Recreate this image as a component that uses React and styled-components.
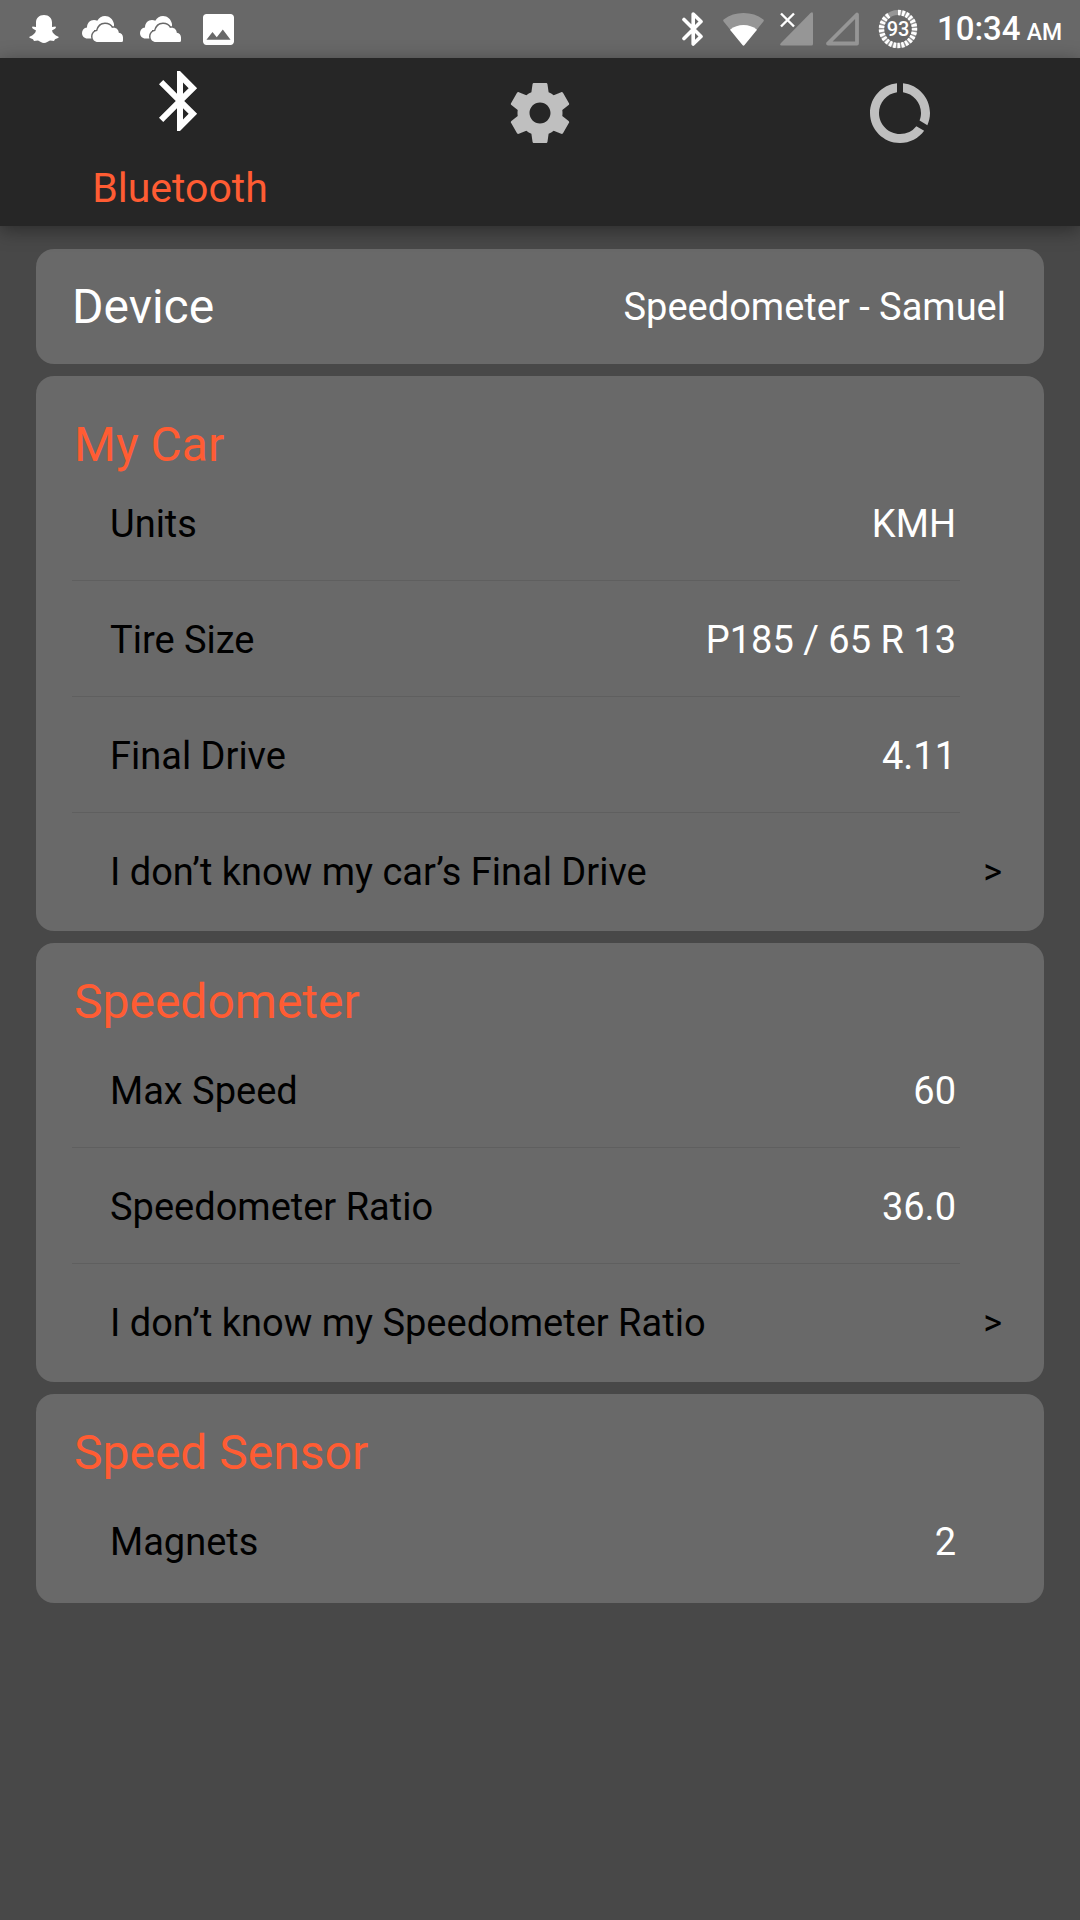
import React from "react";
import styled, { createGlobalStyle } from "styled-components";
import { MdBluetooth, MdDataUsage } from "react-icons/md";

const color = {
  page: "#484848",
  card: "#696969",
  status: "#686868",
  bar: "#262626",
  accent: "#ff5c33",
  muted: "#bfbfbf",
  faded: "#969696",
  line: "#5f5f5f",
};

const GlobalStyle = createGlobalStyle`
  * { box-sizing: border-box; }
  body {
    margin: 0;
    background: ${color.page};
    font-family: Roboto, "Liberation Sans", sans-serif;
    color: #fff;
  }
`;

const StatusBar = styled.header`
  display: flex;
  justify-content: space-between;
  align-items: center;
  height: 58px;
  padding: 0 18px 0 20px;
  background: ${color.status};
`;

const Notifications = styled.div`
  display: flex;
  align-items: center;
  gap: 10px;
`;

const NotificationSlot = styled.span`
  display: flex;
  justify-content: center;
  width: 48px;
`;

const Indicators = styled.div`
  display: flex;
  align-items: center;
  gap: 16px;
`;

const SignalPair = styled.span`
  display: flex;
  gap: 13px;
`;

const Clock = styled.time`
  padding-top: 4px;
  font-size: 33px;
  line-height: 40px;
  font-weight: 500;
  white-space: nowrap;
`;

const Meridiem = styled.small`
  margin-left: 6px;
  font-size: 23px;
`;

const TabBar = styled.nav`
  position: relative;
  display: grid;
  grid-template-columns: repeat(3, 1fr);
  height: 168px;
  background: ${color.bar};
  box-shadow: 0 4px 18px rgba(0, 0, 0, 0.4);
`;

const Tab = styled.button`
  display: flex;
  flex-direction: column;
  align-items: center;
  gap: 27px;
  padding: ${(p) => (p.$active ? "7px" : "19px")} 0 0;
  border: 0;
  background: none;
  color: ${(p) => (p.$active ? "#fff" : color.muted)};
  font: inherit;
  cursor: pointer;
`;

const TabLabel = styled.span`
  color: ${color.accent};
  font-size: 41px;
  line-height: 48px;
`;

const Settings = styled.main`
  display: flex;
  flex-direction: column;
  gap: 12px;
  padding: 23px 36px;
`;

const Card = styled.section`
  padding: 0 36px 4px;
  border-radius: 18px;
  background: ${color.card};
`;

const DeviceCard = styled(Card)`
  display: flex;
  align-items: center;
  justify-content: space-between;
  height: 115px;
  padding: 0 38px 0 36px;
`;

const DeviceLabel = styled.label`
  font-size: 48px;
  line-height: 56px;
`;

const CardTitle = styled.h2`
  height: 89px;
  margin: 0;
  padding: ${(p) => (p.$low ? "41px" : "31px")} 0 0 2px;
  color: ${color.accent};
  font-size: 48px;
  line-height: 56px;
  font-weight: 400;
`;

const Row = styled.div`
  display: flex;
  align-items: center;
  justify-content: space-between;
  height: 116px;
  margin-right: 48px;
  padding: 3px 4px 0 38px;
  border-bottom: 1px solid ${(p) => (p.$last ? "transparent" : color.line)};
`;

const RowLabel = styled.label`
  color: #000;
  font-size: 38px;
  line-height: 44px;
`;

const Field = styled.input`
  width: 360px;
  padding: 0;
  border: 0;
  outline: 0;
  background: none;
  color: #fff;
  font: inherit;
  font-size: 38px;
  line-height: 44px;
  text-align: right;
`;

const Picker = styled.select`
  appearance: none;
  padding: 0;
  border: 0;
  outline: 0;
  background: none;
  color: #fff;
  font: inherit;
  font-size: 38px;
  line-height: 44px;
  text-align-last: right;
`;

const HelpLink = styled.a`
  display: flex;
  align-items: center;
  justify-content: space-between;
  height: 114px;
  padding: 4px 6px 0 38px;
  color: #000;
  font-size: 38px;
  line-height: 44px;
  text-decoration: none;
`;

const Chevron = styled.span`
  font-size: 36px;
`;

const SnapchatIcon = () => (
  <svg width="30" height="28" viewBox="0 0 30 28" fill="#fff" aria-hidden="true">
    <path d="M15 0C10 0 7 3.2 7 7.5V12L3.6 11.6Q2.4 12.8 4 13.8L7 15.4C6.5 18 4 20.4 1 21.5Q-.3 22.2 1 23L4 24.2L5 26L9 25.6C11 26.4 12.5 28 15 28S19 26.4 21 25.6L25 26L26 24.2L29 23Q30.3 22.2 29 21.5C26 20.4 23.5 18 23 15.4L26 13.8Q27.6 12.8 26.4 11.6L23 12V7.5C23 3.2 20 0 15 0Z" />
  </svg>
);

const frontCloud =
  "M16 26C12.500 26 10.500 23.600 10.500 20.500C10.500 17.500 12.600 15.300 15.300 15C16.300 10.800 19.200 8 23 8C26.300 8 28.800 9.600 30 12C33.800 11 36.600 13.400 36.800 16.800C39.400 17 41 19 41 21.500V24.500Q41 26 39.500 26Z";

const CloudIcon = () => (
  <svg width="41" height="26" viewBox="0 0 41 26" fill="#fff" aria-hidden="true">
    <path d="M5.500 22.500C2.200 22.500 0 20 0 17C0 14 2 11.800 5 11.500C5 7 8 4 12 4C13.200 4 14.400 4.300 15.300 4.800C17 1.800 19.700 0 23 0C27.500 0 31 3 32 8V14H12V22.500Z" />
    <path d={frontCloud} stroke={color.status} strokeWidth="3" />
    <path d={frontCloud} />
  </svg>
);

const PictureIcon = () => (
  <svg width="31" height="31" viewBox="3 3 18 18" fill="#fff" aria-hidden="true">
    <path d="M21 19V5c0-1.100-.9-2-2-2H5c-1.100 0-2 .9-2 2v14c0 1.100.9 2 2 2h14c1.100 0 2-.9 2-2zM8.500 13.500l2.500 3.010L14.500 12l4.500 6H5l3.500-4.500z" />
  </svg>
);

const BluetoothStatusIcon = () => (
  <svg width="29" height="34" viewBox="0 0 29 34" fill="none" stroke="#fff" strokeWidth="3.600" strokeLinejoin="round" strokeLinecap="round" aria-hidden="true">
    <path d="M6 7.500L23 24.500L15.200 32V2L23 9.500L6 26.500" />
  </svg>
);

const WifiIcon = () => (
  <svg width="41" height="33" viewBox="0 0 41 33" aria-hidden="true">
    <path fill={color.faded} d="M.6 8.600Q-.4 7.300 1 6.300C6.500 2 13 0 20.500 0S34.500 2 40 6.300Q41.400 7.300 40.400 8.600L20.500 33Z" />
    <path fill="#fff" d="M7 16.700C11 13.500 15.500 12 20.500 12S30 13.500 34 16.700L21.500 32Q20.500 33 19.500 32Z" />
  </svg>
);

const NoSignalIcon = () => (
  <svg width="33" height="34" viewBox="0 0 33 34" aria-hidden="true">
    <path fill={color.faded} d="M30.500 1Q33 -1 33 2V32Q33 33.500 31.500 33.500H1.500Q-1 33.500 1 31Z" />
    <path fill="none" stroke="#fff" strokeWidth="2.400" d="M1 1.500L14 14.500M14 1.500L1 14.500" />
  </svg>
);

const EmptySignalIcon = () => (
  <svg width="33" height="34" viewBox="0 0 33 34" aria-hidden="true">
    <path fill="none" stroke={color.faded} strokeWidth="3.800" strokeLinejoin="round" d="M31 2.500V31.500H2Z" />
  </svg>
);

const BatteryIcon = () => (
  <svg width="46" height="40" viewBox="0 0 46 40" role="img" aria-label="Battery 93 percent">
    <circle cx="23" cy="20" r="16.500" fill="none" stroke={color.faded} strokeWidth="5" />
    <circle cx="23" cy="20" r="16.500" fill="none" stroke="#fff" strokeWidth="5.500" pathLength="100" strokeDasharray="2.600 1.400 2.600 1.400 2.600 1.400 2.600 1.400 2.600 1.400 2.600 1.400 2.600 1.400 2.600 1.400 2.600 1.400 2.600 1.400 2.600 1.400 2.600 1.400 2.600 1.400 2.600 1.400 2.600 1.400 2.600 1.400 2.600 1.400 2.600 1.400 2.600 1.400 2.600 1.400 2.600 1.400 2.600 1.400 2.600 9.400" transform="rotate(-90 23 20)" />
    <text x="23" y="27" textAnchor="middle" fontSize="20" fontWeight="500" fill="#fff">93</text>
  </svg>
);

const GearIcon = () => (
  <svg width="72" height="72" viewBox="0 0 24 24" fill="currentColor" aria-hidden="true">
    <path d="M19.430 12.980c.04-.32.07-.64.07-.98s-.03-.66-.07-.98l2.110-1.650c.19-.15.24-.42.12-.64l-2-3.460c-.12-.22-.39-.3-.61-.22l-2.490 1c-.52-.4-1.080-.73-1.690-.98l-.38-2.650C14.460 2.180 14.250 2 14 2h-4c-.25 0-.46.18-.49.42l-.38 2.650c-.61.25-1.170.59-1.690.98l-2.490-1c-.23-.09-.49 0-.61.22l-2 3.460c-.13.22-.07.49.12.64l2.110 1.650c-.04.32-.07.65-.07.98s.03.66.07.98l-2.110 1.650c-.19.15-.24.42-.12.64l2 3.460c.12.22.39.3.61.22l2.490-1c.52.4 1.080.73 1.690.98l.38 2.650c.03.24.24.42.49.42h4c.25 0 .46-.18.49-.42l.38-2.650c.61-.25 1.170-.59 1.690-.98l2.490 1c.23.09.49 0 .61-.22l2-3.460c.12-.22.07-.49-.12-.64l-2.110-1.650zM12 15.500c-1.930 0-3.500-1.570-3.500-3.500s1.570-3.500 3.500-3.500 3.500 1.570 3.500 3.500-1.570 3.500-3.500 3.500z" />
  </svg>
);

const FieldRow = ({ id, label, value, last }) => (
  <Row $last={last}>
    <RowLabel htmlFor={id}>{label}</RowLabel>
    <Field id={id} type="text" defaultValue={value} />
  </Row>
);

const HelpRow = ({ children }) => (
  <HelpLink href="#help">
    <span>{children}</span>
    <Chevron>&gt;</Chevron>
  </HelpLink>
);

export default function App() {
  return (
    <>
      <GlobalStyle />
      <StatusBar>
        <Notifications>
          <NotificationSlot><SnapchatIcon /></NotificationSlot>
          <NotificationSlot><CloudIcon /></NotificationSlot>
          <NotificationSlot><CloudIcon /></NotificationSlot>
          <NotificationSlot><PictureIcon /></NotificationSlot>
        </Notifications>
        <Indicators>
          <BluetoothStatusIcon />
          <WifiIcon />
          <SignalPair>
            <NoSignalIcon />
            <EmptySignalIcon />
          </SignalPair>
          <BatteryIcon />
          <Clock>10:34<Meridiem>AM</Meridiem></Clock>
        </Indicators>
      </StatusBar>
      <TabBar>
        <Tab type="button" $active>
          <MdBluetooth size={72} aria-hidden="true" />
          <TabLabel>Bluetooth</TabLabel>
        </Tab>
        <Tab type="button" aria-label="Settings"><GearIcon /></Tab>
        <Tab type="button" aria-label="Usage"><MdDataUsage size={72} aria-hidden="true" /></Tab>
      </TabBar>
      <Settings>
        <DeviceCard>
          <DeviceLabel htmlFor="device">Device</DeviceLabel>
          <Picker id="device" defaultValue="samuel">
            <option value="samuel">Speedometer - Samuel</option>
          </Picker>
        </DeviceCard>
        <Card>
          <CardTitle $low>My Car</CardTitle>
          <Row>
            <RowLabel htmlFor="units">Units</RowLabel>
            <Picker id="units" defaultValue="kmh">
              <option value="kmh">KMH</option>
            </Picker>
          </Row>
          <FieldRow id="tire" label="Tire Size" value="P185 / 65 R 13" />
          <FieldRow id="drive" label="Final Drive" value="4.11" />
          <HelpRow>I don’t know my car’s Final Drive</HelpRow>
        </Card>
        <Card>
          <CardTitle>Speedometer</CardTitle>
          <FieldRow id="max" label="Max Speed" value="60" />
          <FieldRow id="ratio" label="Speedometer Ratio" value="36.0" />
          <HelpRow>I don’t know my Speedometer Ratio</HelpRow>
        </Card>
        <Card>
          <CardTitle>Speed Sensor</CardTitle>
          <FieldRow id="magnets" label="Magnets" value="2" last />
        </Card>
      </Settings>
    </>
  );
}
